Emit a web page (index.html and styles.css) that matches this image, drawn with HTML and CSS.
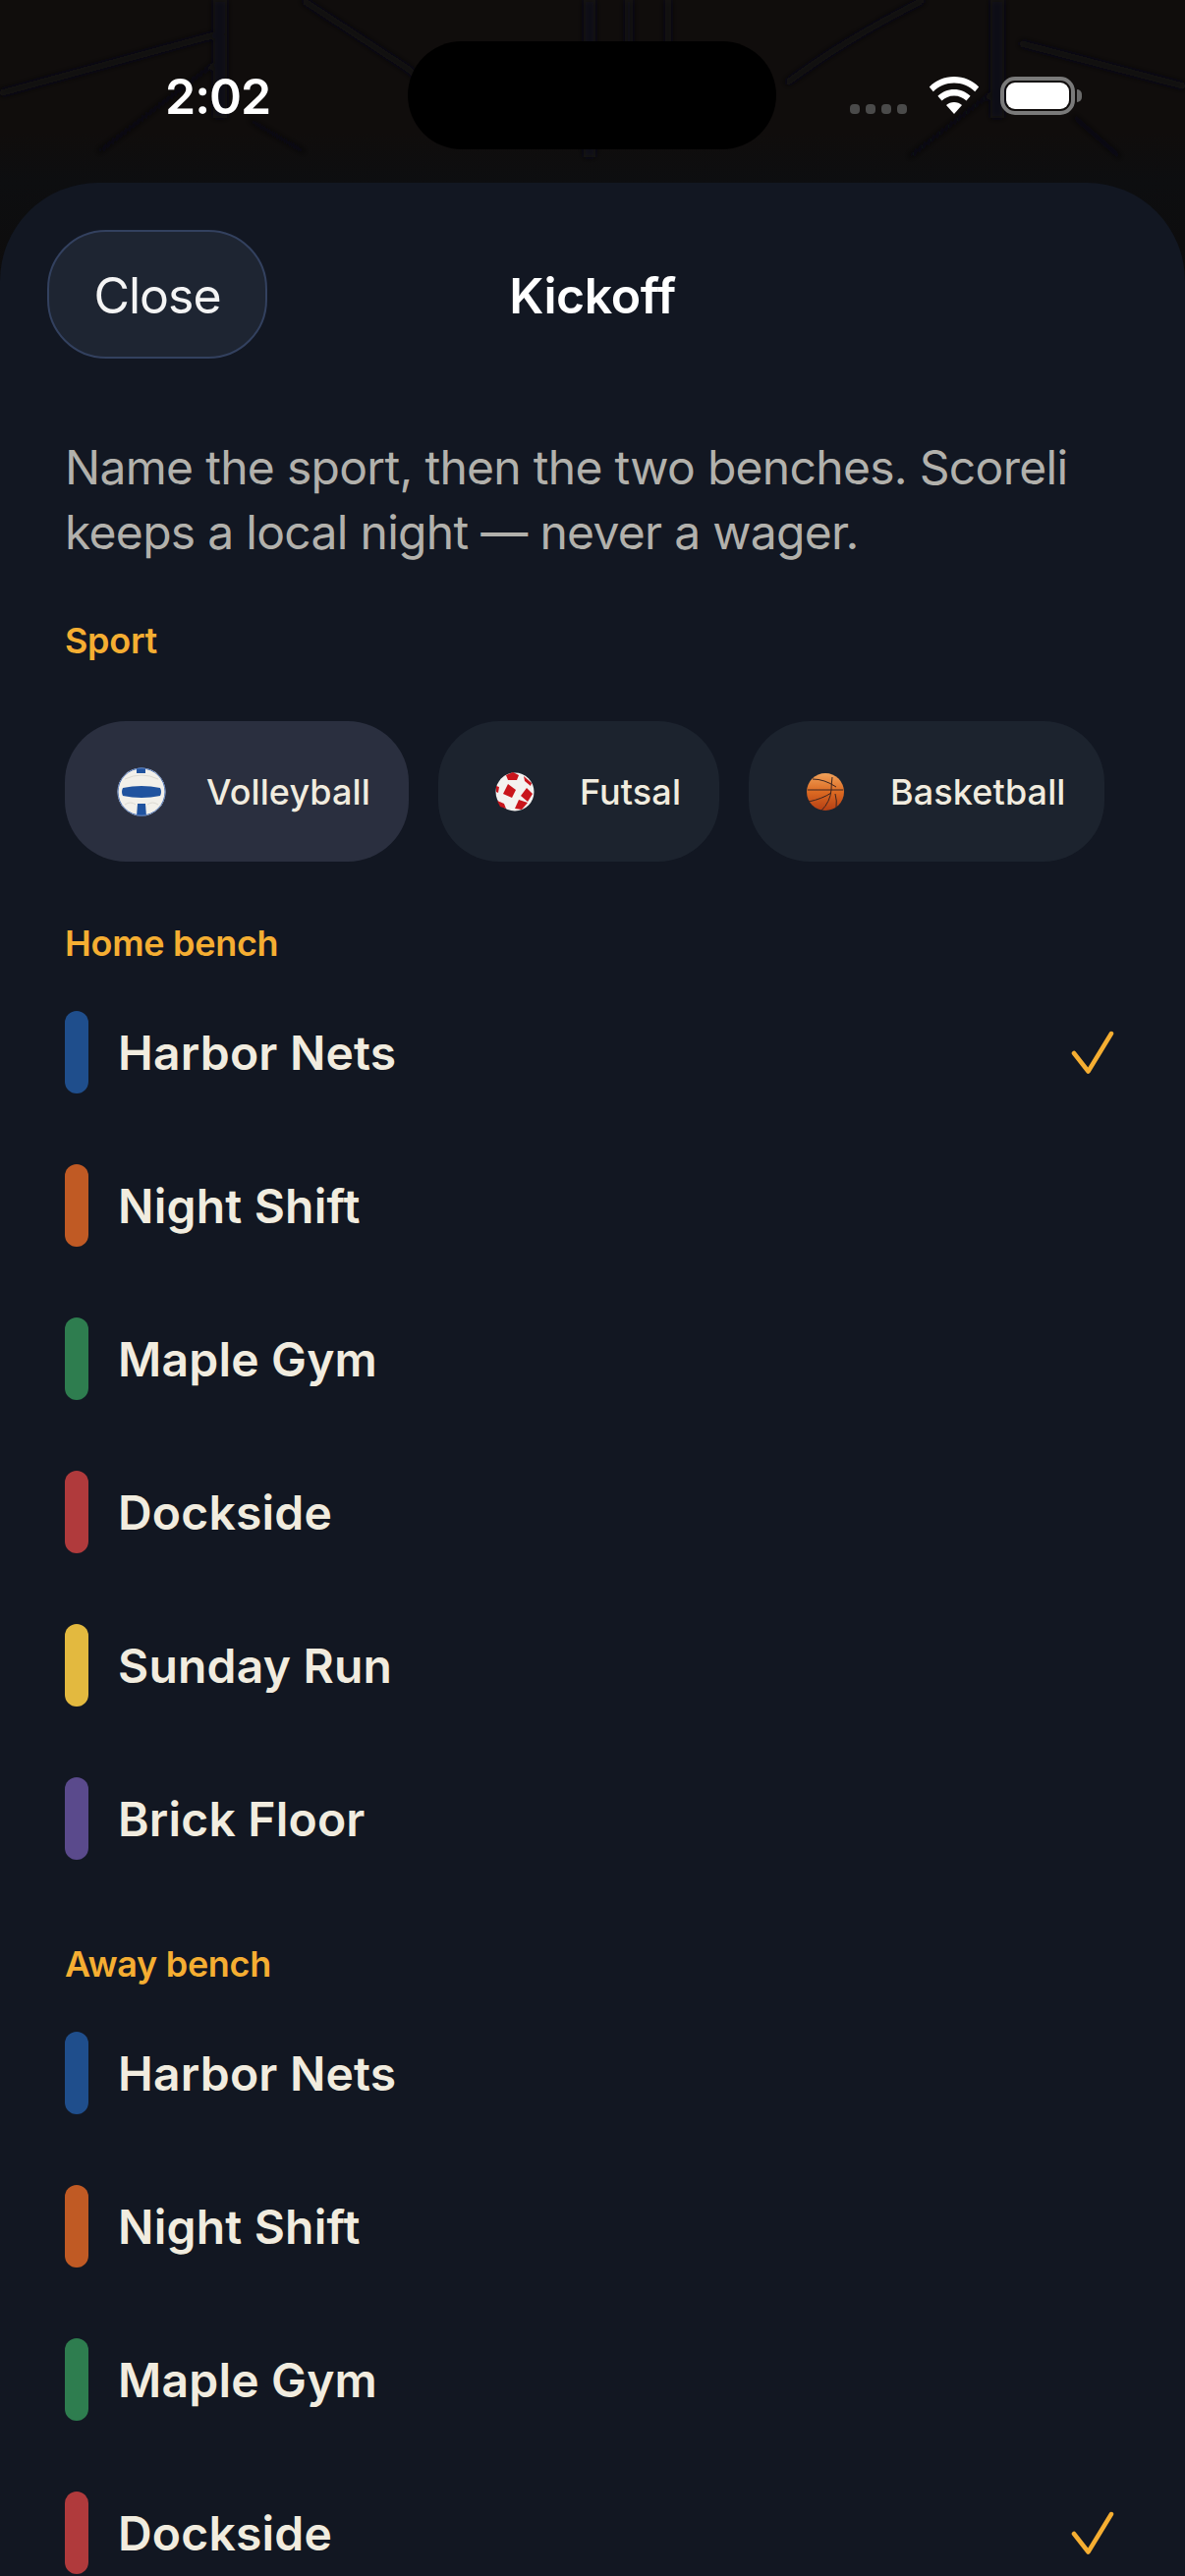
FILE: index.html
```html
<!DOCTYPE html>
<html>
<head>
    <title>Kickoff</title>
    <link rel="stylesheet" href="styles.css">
</head>
<body>
    <div class="phone">
        <!-- dim gym roof behind the sheet -->
        <svg class="backdrop" width="1206" height="300" viewBox="0 0 1206 300">
            <defs>
                <filter id="soft"><feGaussianBlur stdDeviation="3"/></filter>
                <linearGradient id="roof" x1="0" y1="0" x2="0" y2="1">
                    <stop offset="0" stop-color="#100d0c"/>
                    <stop offset=".45" stop-color="#100d0c"/>
                    <stop offset=".62" stop-color="#0d0e10"/>
                    <stop offset="1" stop-color="#0e0c0c"/>
                </linearGradient>
            </defs>
            <rect width="1206" height="300" fill="url(#roof)"/>
            <g stroke="#0e0f12" fill="none" filter="url(#soft)">
                <path d="M224 0V120" stroke-width="14"/>
                <path d="M308 0L415 70L450 100" stroke-width="6"/>
                <path d="M224 34L0 95" stroke-width="6"/>
                <path d="M224 60L100 155" stroke-width="3"/>
                <path d="M254 122L310 155" stroke-width="3"/>
                <path d="M600 0V160" stroke-width="12"/>
                <path d="M640 0V130" stroke-width="8"/>
                <path d="M680 0V110" stroke-width="6"/>
                <path d="M940 0Q860 40 800 85" stroke-width="6"/>
                <path d="M1015 0V120" stroke-width="14"/>
                <path d="M1038 44L1206 88" stroke-width="6"/>
                <path d="M1015 90L925 160" stroke-width="3"/>
                <path d="M1092 118L1140 160" stroke-width="3"/>
            </g>
        </svg>

        <div class="status-bar">
            <span class="time">2:02</span>
            <div class="island"></div>
            <div class="status-icons">
                <div class="signal"><i></i><i></i><i></i><i></i></div>
                <svg class="wifi" width="52" height="38" viewBox="0 0 52 38">
                    <path d="M26 0C16 0 7.500 3.800 .8 10.400L4.800 15.200C10.400 9.800 17.800 6.600 26 6.600S41.600 9.800 47.200 15.200L51.200 10.400C44.500 3.800 36 0 26 0Z" fill="#fff"/>
                    <path d="M26 13C19.600 13 13.800 15.500 9.400 19.800L13.500 24.600C16.700 21.600 21 19.600 26 19.600S35.300 21.600 38.500 24.600L42.600 19.800C38.200 15.500 32.400 13 26 13Z" fill="#fff"/>
                    <path d="M26 26C23 26 20.200 27.100 18 29L26 38L34 29C31.800 27.100 29 26 26 26Z" fill="#fff"/>
                </svg>
                <div class="battery">
                    <div class="battery-body"><div class="battery-fill"></div></div>
                    <div class="battery-nub"></div>
                </div>
            </div>
        </div>

        <div class="sheet">
            <div class="sheet-header">
                <button class="close-btn">Close</button>
                <div class="sheet-title">Kickoff</div>
                <div></div>
            </div>

            <p class="intro">Name the sport, then the two benches. Scoreli keeps a local night — never a wager.</p>

            <div class="section-label sport-label">Sport</div>
            <div class="chips">
                <div class="chip active">
                    <span class="chip-icon">
                        <svg width="50" height="50" viewBox="0 0 50 50">
                            <defs><clipPath id="vb"><ellipse cx="25" cy="25" rx="24.500" ry="24.500"/></clipPath></defs>
                            <ellipse cx="25" cy="25" rx="24.500" ry="24.500" fill="#f2f0ea"/>
                            <g clip-path="url(#vb)" fill="#20539f">
                                <rect x="20" y="0" width="9" height="6"/>
                                <path d="M6 21Q25 17 44 21Q46 25 44 29Q25 33 6 29Q4 25 6 21Z"/>
                                <path d="M21 37H29L30 50H20Z"/>
                            </g>
                            <path d="M8 12Q25 4 42 12M8 38Q14 34 19 38M31 38Q36 34 42 38" fill="none" stroke="#dcdad2" stroke-width="1"/>
                            <ellipse cx="25" cy="25" rx="24" ry="24" fill="none" stroke="#4d73b5" stroke-width="1"/>
                        </svg>
                    </span>
                    <span>Volleyball</span>
                </div>
                <div class="chip">
                    <span class="chip-icon">
                        <svg width="40" height="40" viewBox="0 0 40 40">
                            <circle cx="20" cy="20" r="19.500" fill="#f4f2f0"/>
                            <g fill="#c9151c">
                                <path d="M11 3L18 0L24 3L22 8L13 8Z"/>
                                <path d="M13 12L21 18L17 26L8 22Z"/>
                                <path d="M32 16L38 22L33 30L26 24Z"/>
                                <path d="M29 4L37 11L36 14L30 9Z"/>
                                <path d="M1 14L4 15L3 21L1 20Z"/>
                                <path d="M2 29L9 32L11 37L5 35Z"/>
                                <path d="M24 28L33 31L27 38L20 37Z"/>
                            </g>
                        </svg>
                    </span>
                    <span>Futsal</span>
                </div>
                <div class="chip">
                    <span class="chip-icon">
                        <svg width="38" height="38" viewBox="0 0 38 38">
                            <defs>
                                <linearGradient id="bb" x1="0" y1="0" x2="0" y2="1">
                                    <stop offset="0" stop-color="#f0a25a"/>
                                    <stop offset=".5" stop-color="#dc6a22"/>
                                    <stop offset="1" stop-color="#b53f14"/>
                                </linearGradient>
                            </defs>
                            <circle cx="19" cy="19" r="19" fill="url(#bb)"/>
                            <path d="M1 17H37M26 4Q25 12 25 17Q24 29 15 38M6 6Q18 6 30 14M2 29Q16 26 25 20M29 21Q31 28 30 35" fill="none" stroke="#3a2420" stroke-width="1"/>
                        </svg>
                    </span>
                    <span>Basketball</span>
                </div>
            </div>

            <div class="section-label home-label">Home bench</div>
            <div class="team-list">
                <div class="team-row">
                    <span class="swatch blue"></span>
                    <span class="team-name">Harbor Nets</span>
                    <svg class="check" width="44" height="44" viewBox="0 0 44 44">
                        <path d="M3 23L17.500 41.500L41 3" fill="none" stroke="#f5ae32" stroke-width="4.500" stroke-linecap="round" stroke-linejoin="round"/>
                    </svg>
                </div>
                <div class="team-row"><span class="swatch orange"></span><span class="team-name">Night Shift</span></div>
                <div class="team-row"><span class="swatch green"></span><span class="team-name">Maple Gym</span></div>
                <div class="team-row"><span class="swatch red"></span><span class="team-name">Dockside</span></div>
                <div class="team-row"><span class="swatch yellow"></span><span class="team-name">Sunday Run</span></div>
                <div class="team-row"><span class="swatch purple"></span><span class="team-name">Brick Floor</span></div>
            </div>

            <div class="section-label away-label">Away bench</div>
            <div class="team-list away-list">
                <div class="team-row"><span class="swatch blue"></span><span class="team-name">Harbor Nets</span></div>
                <div class="team-row"><span class="swatch orange"></span><span class="team-name">Night Shift</span></div>
                <div class="team-row"><span class="swatch green"></span><span class="team-name">Maple Gym</span></div>
                <div class="team-row">
                    <span class="swatch red"></span>
                    <span class="team-name">Dockside</span>
                    <svg class="check" width="44" height="44" viewBox="0 0 44 44">
                        <path d="M3 23L17.500 41.500L41 3" fill="none" stroke="#f5ae32" stroke-width="4.500" stroke-linecap="round" stroke-linejoin="round"/>
                    </svg>
                </div>
            </div>
        </div>
    </div>
</body>
</html>
```

FILE: styles.css
```css
* {
    box-sizing: border-box;
}

html, body {
    margin: 0;
    padding: 0;
    background: #100d0c;
}

body {
    font-family: 'Inter', 'Liberation Sans', sans-serif;
}

.phone {
    position: relative;
    width: 1206px;
    height: 2622px;
    overflow: hidden;
}

.backdrop {
    position: absolute;
    top: 0;
    left: 0;
}

.status-bar {
    position: relative;
    height: 186px;
    padding: 0 105px 0 168px;
    display: flex;
    justify-content: space-between;
    align-items: flex-start;
}

.time {
    margin-top: 68px;
    color: #fff;
    font-size: 50px;
    font-weight: 600;
    line-height: 60px;
    letter-spacing: -1px;
}

.island {
    position: absolute;
    top: 42px;
    left: 415px;
    width: 375px;
    height: 110px;
    background: #000;
    border-radius: 55px;
}

.status-icons {
    display: flex;
    align-items: flex-end;
    margin-top: 78px;
}

.signal {
    display: flex;
    gap: 6px;
    margin-right: 22px;
    margin-bottom: 1px;
}

.signal i {
    display: block;
    width: 10px;
    height: 10px;
    border-radius: 4px;
    background: #4a4a4a;
}

.wifi {
    margin-right: 21px;
    margin-bottom: 1px;
}

.battery {
    display: flex;
    align-items: center;
}

.battery-body {
    width: 76px;
    height: 39px;
    padding: 2px;
    border: 4px solid #7a7a7a;
    border-radius: 15px;
}

.battery-fill {
    width: 100%;
    height: 100%;
    background: #fff;
    border-radius: 9px;
}

.battery-nub {
    width: 5px;
    height: 13px;
    margin-left: 2px;
    background: #6a6a6a;
    border-radius: 0 5px 5px 0;
}

.sheet {
    position: relative;
    height: 2436px;
    padding-top: 48px;
    background: #121722;
    border-radius: 100px 100px 0 0;
}

.sheet-header {
    display: grid;
    grid-template-columns: 1fr auto 1fr;
    align-items: center;
    padding: 0 48px;
}

.close-btn {
    width: 224px;
    height: 131px;
    padding: 2px 0 0;
    background: #1e2532;
    border: 2px solid #33415f;
    border-radius: 60px;
    color: #f4f4f4;
    font-family: inherit;
    font-size: 50px;
    font-weight: 400;
    letter-spacing: -1px;
}

.sheet-title {
    padding-top: 2px;
    color: #fff;
    font-size: 50px;
    font-weight: 600;
    letter-spacing: -0.4px;
}

.intro {
    margin: 78px 66px 0;
    color: #b2b1ac;
    font-size: 48px;
    line-height: 66px;
    letter-spacing: -0.7px;
}

.section-label {
    padding: 0 66px;
    color: #f5ae32;
    font-size: 36px;
    font-weight: 600;
    line-height: 44px;
    letter-spacing: -0.3px;
}

.sport-label {
    margin-top: 55px;
}

.home-label {
    margin-top: 61px;
}

.away-label {
    margin-top: 48px;
}

.chips {
    display: flex;
    gap: 30px;
    margin-top: 60px;
    padding: 0 66px;
}

.chip {
    display: flex;
    align-items: center;
    height: 143px;
    padding: 0 39px 0 40px;
    background: #1c232e;
    border-radius: 62px;
    color: #f1ecdf;
    font-size: 36px;
    font-weight: 500;
    letter-spacing: 0.1px;
}

.chip.active {
    background: #2a2f3f;
}

.chip-icon {
    display: flex;
    justify-content: center;
    width: 76px;
    margin-right: 28px;
}

.team-list {
    margin-top: 11px;
}

.away-list {
    margin-top: 11px;
}

.team-row {
    display: flex;
    align-items: center;
    height: 156px;
    padding: 0 72px 0 66px;
}

.swatch {
    width: 24px;
    height: 84px;
    margin-right: 30px;
    border-radius: 12px;
}

.team-name {
    color: #f1ecdf;
    font-size: 48px;
    font-weight: 560;
    letter-spacing: 0.2px;
}

.check {
    margin-left: auto;
}

.blue { background: #1f4e8c; }
.orange { background: #c05a24; }
.green { background: #2e7d4f; }
.red { background: #b03a3c; }
.yellow { background: #e3b93f; }
.purple { background: #5a4a8c; }
```
